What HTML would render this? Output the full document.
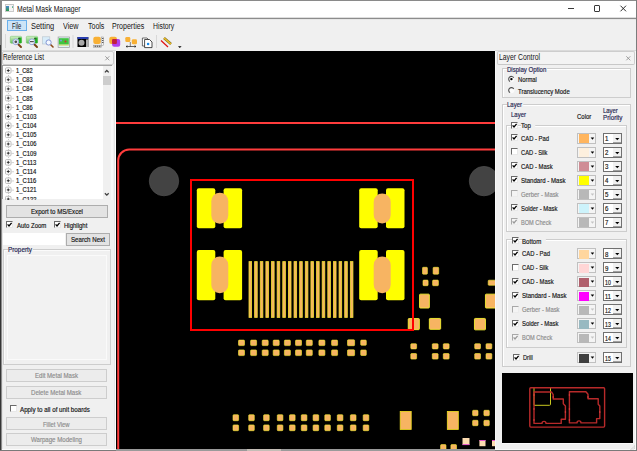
<!DOCTYPE html><html><head><meta charset="utf-8"><style>
*{box-sizing:border-box;margin:0;padding:0}
html,body{width:637px;height:451px;overflow:hidden;background:#f0f0f0;font-family:"Liberation Sans",sans-serif;font-size:7px;color:#000;position:relative}
.a{position:absolute}
.t{position:absolute;white-space:nowrap;line-height:1;-webkit-text-stroke:0.18px currentColor}
</style></head><body><div class="a" style="left:2px;top:1px;width:634px;height:17px;background:#fff"></div><div class="a" style="left:0px;top:0px;width:637px;height:1px;background:#8a8a8a"></div><div class="a" style="left:0px;top:0px;width:2px;height:45px;background:#8a8a8a"></div><div class="a" style="left:0px;top:45px;width:1px;height:406px;background:#363636"></div><div class="a" style="left:1px;top:45px;width:1px;height:406px;background:#8c8c8c"></div><div class="a" style="left:636px;top:0px;width:1px;height:451px;background:#7c7c7c"></div><div class="a" style="left:2px;top:17px;width:634px;height:1px;background:#dedede"></div><div class="a" style="left:2px;top:18px;width:634px;height:1px;background:#8c8c8c"></div><div class="a" style="left:2px;top:19px;width:634px;height:1px;background:#e6e6e6"></div><div class="a" style="left:5px;top:4.3px;width:9px;height:7.8px;background:#f4f4f4;border:1px solid #cacaca;border-top:1.3px solid #c4c4c4"></div><div class="a" style="left:6.2px;top:5.8px;width:2.8px;height:5px;background:linear-gradient(#4a88d0,#2a9a48)"></div><div class="a" style="left:12px;top:5.8px;width:1px;height:2px;background:linear-gradient(#78b0e0,#60c060)"></div><div class="t" style="left:17.10px;top:5px;font-size:8.3px;color:#141414;transform:scaleX(0.8206);transform-origin:0 0;-webkit-text-stroke:0;">Metal Mask Manager</div><div class="a" style="left:568.2px;top:8px;width:6px;height:1.2px;background:#3a3a3a"></div><div class="a" style="left:594px;top:5px;width:6.3px;height:6.8px;border:1px solid #3a3a3a;border-radius:1px"></div><svg class="a" style="left:619px;top:5px;overflow:visible" width="8" height="8" viewBox="619 5 8 8"><path d="M620.5 5.7L626 11.3M626 5.7L620.5 11.3" stroke="#222" stroke-width="0.95"/></svg><div class="a" style="left:7px;top:20px;width:19.5px;height:11px;background:#cce4f7;border:1px solid #6ab0ec"></div><div class="t" style="left:11.90px;top:22px;font-size:8.3px;color:#141414;transform:scaleX(0.6949);transform-origin:0 0;-webkit-text-stroke:0;">File</div><div class="t" style="left:30.50px;top:22px;font-size:8.3px;color:#141414;transform:scaleX(0.8976);transform-origin:0 0;-webkit-text-stroke:0;">Setting</div><div class="t" style="left:62.70px;top:22px;font-size:8.3px;color:#141414;transform:scaleX(0.8686);transform-origin:0 0;-webkit-text-stroke:0;">View</div><div class="t" style="left:87.60px;top:22px;font-size:8.3px;color:#141414;transform:scaleX(0.8459);transform-origin:0 0;-webkit-text-stroke:0;">Tools</div><div class="t" style="left:112.40px;top:22px;font-size:8.3px;color:#141414;transform:scaleX(0.8512);transform-origin:0 0;-webkit-text-stroke:0;">Properties</div><div class="t" style="left:153.00px;top:22px;font-size:8.3px;color:#141414;transform:scaleX(0.8245);transform-origin:0 0;-webkit-text-stroke:0;">History</div><div class="a" style="left:5px;top:34px;width:1px;height:14px;background:#d8d8d8"></div><div class="a" style="left:2px;top:50px;width:114px;height:1px;background:#dadada"></div><div class="a" style="left:495px;top:50px;width:141px;height:1px;background:#dadada"></div><svg class="a" style="left:0;top:33px" width="190" height="17" viewBox="0 33 190 17">
<defs>
<linearGradient id="gg" x1="0" y1="0" x2="0" y2="1"><stop offset="0" stop-color="#d2f0ca"/><stop offset="0.5" stop-color="#9ad88e"/><stop offset="1" stop-color="#62c05a"/></linearGradient>
</defs>
<rect x="10.3" y="36.3" width="11.3" height="7" rx="1" fill="url(#gg)" stroke="#6cbf60" stroke-width="0.5"/>
<rect x="18.5" y="37.5" width="3" height="5.5" fill="#22b022"/><circle cx="19" cy="38.5" r="0.8" fill="#3a3a3a"/>
<line x1="18" y1="44" x2="21" y2="47" stroke="#7a4418" stroke-width="2" stroke-linecap="round"/>
<circle cx="15.8" cy="41.8" r="2.9" fill="#e8eef8" stroke="#98a8dc" stroke-width="1"/>
<circle cx="15.8" cy="41.8" r="1.4" fill="#505050"/>
<rect x="26.3" y="36.3" width="11.3" height="7" rx="1" fill="url(#gg)" stroke="#6cbf60" stroke-width="0.5"/>
<rect x="34.5" y="37.5" width="3" height="5.5" fill="#22b022"/><circle cx="35" cy="38.5" r="0.8" fill="#3a3a3a"/>
<line x1="34" y1="44" x2="37" y2="47" stroke="#7a4418" stroke-width="2" stroke-linecap="round"/>
<circle cx="31.9" cy="41.8" r="2.9" fill="#eef2fa" stroke="#98a8dc" stroke-width="1"/>
<rect x="30" y="41" width="3.8" height="1.2" fill="#555"/>
<rect x="42.3" y="36.8" width="7.5" height="7.2" fill="#d8ecf8" stroke="#b8c4cc" stroke-width="0.6"/>
<line x1="50" y1="44" x2="53" y2="47" stroke="#8a4a1a" stroke-width="1.6" stroke-linecap="round"/>
<circle cx="48.6" cy="42.5" r="2.6" fill="#f4f8ff" stroke="#7c8fd0" stroke-width="0.9"/>
<rect x="58.1" y="37" width="11.3" height="10.5" fill="#dff3f8" stroke="#9a9a9a" stroke-width="0.7"/>
<rect x="58.8" y="38.2" width="10" height="6.4" fill="#3fc43f"/>
<circle cx="61" cy="40.5" r="1" fill="#7aa0e0"/><circle cx="65.5" cy="41.5" r="1" fill="#d03030"/>
<rect x="59" y="44.6" width="9.8" height="1" fill="#d8d860"/>
<rect x="72.5" y="35" width="1" height="13" fill="#d8d8d8"/>
<rect x="77.5" y="37" width="10.8" height="10" fill="#000"/>
<rect x="77.5" y="37" width="10.8" height="2" fill="#2a3fb0"/>
<circle cx="81.5" cy="42.8" r="3" fill="#a8a8a8"/>
<rect x="86" y="39.5" width="2" height="7.5" fill="#b0b0b0"/>
<rect x="93.3" y="36.8" width="7.5" height="7.2" rx="2" fill="#f8b034"/>
<rect x="101.2" y="37" width="2.4" height="8.5" fill="#f4f4f4" stroke="#8a8a8a" stroke-width="0.5"/>
<path d="M102 38.5H103.4M102 40.5H103.4M102 42.5H103.4" stroke="#333" stroke-width="0.8"/>
<rect x="93.5" y="45.2" width="8" height="2" fill="#f4f4f4" stroke="#8a8a8a" stroke-width="0.5"/>
<path d="M94.5 46.2H100.5" stroke="#333" stroke-width="1" stroke-dasharray="1.6 0.6"/>
<rect x="109.3" y="36.8" width="7.6" height="7.2" rx="2" fill="#f8b034"/>
<rect x="112.1" y="39" width="8.1" height="7.8" rx="2" fill="#b040f0"/>
<rect x="112.1" y="39" width="4.8" height="5" rx="1" fill="#c02040"/>
<rect x="125.3" y="37" width="5" height="5" rx="1.3" fill="#f8b034"/>
<rect x="131.8" y="39.3" width="5.2" height="5" rx="1.3" fill="#f8b034"/>
<line x1="130.3" y1="42" x2="130.3" y2="46.5" stroke="#333" stroke-width="0.6"/>
<path d="M126 46.5H136M126 46.5L127.5 45.7M126 46.5L127.5 47.3M136 46.5L134.5 45.7M136 46.5L134.5 47.3" stroke="#222" stroke-width="0.7" fill="none"/>
<path d="M142.4 38H147L149 40V46H142.4Z" fill="#fff" stroke="#333" stroke-width="0.7"/>
<path d="M144.6 39.5H149.5L152 42V47.6H144.6Z" fill="#fff" stroke="#222" stroke-width="0.8"/>
<circle cx="148.1" cy="44" r="1.3" fill="#1a8ae8"/>
<rect x="156" y="35" width="1" height="13" fill="#d8d8d8"/>
<line x1="164" y1="38" x2="171" y2="44" stroke="#7a6a30" stroke-width="2.6"/>
<line x1="164" y1="38" x2="171" y2="44" stroke="#f0c020" stroke-width="1.6"/>
<line x1="161" y1="40.5" x2="168" y2="47" stroke="#e01010" stroke-width="1.2"/>
<path d="M178 46.3H181.6L179.8 48Z" fill="#000"/>
</svg><div class="a" style="left:2px;top:51px;width:112px;height:14px;background:#f3f3f3;border:1px solid #cdcdcd;border-radius:2px"></div><div class="a" style="left:2px;top:65px;width:110px;height:1px;background:#a4a4a4"></div><div class="t" style="left:3.10px;top:53px;font-size:8.3px;color:#141414;transform:scaleX(0.7679);transform-origin:0 0;-webkit-text-stroke:0;">Reference List</div><svg class="a" style="left:104px;top:55px;overflow:visible" width="7" height="7" viewBox="104 55 7 7"><path d="M105.3 56.3L109.3 60.3M109.3 56.3L105.3 60.3" stroke="#8a8a8a" stroke-width="0.8"/></svg><div class="a" style="left:2px;top:66px;width:110px;height:133px;background:#fff"></div><div class="a" style="left:103px;top:66px;width:8px;height:134px;background:#f0f0f0"></div><div class="a" style="left:103px;top:76px;width:8px;height:9px;background:#cdcdcd"></div><svg class="a" style="left:103px;top:66px;overflow:visible" width="8" height="8" viewBox="103 66 8 8"><path d="M104.9 72.4L106.8 70.5L108.7 72.4" stroke="#404040" fill="none" stroke-width="1.3"/></svg><svg class="a" style="left:103px;top:190px;overflow:visible" width="8" height="8" viewBox="103 190 8 8"><path d="M104.9 193.3L106.8 195.2L108.7 193.3" stroke="#404040" fill="none" stroke-width="1.3"/></svg><div class="a" style="left:111px;top:66px;width:2px;height:134px;background:#f8f8f8"></div><svg class="a" style="left:2px;top:66px" width="100" height="134" viewBox="2 66 100 134"><line x1="8.5" y1="73" x2="8.5" y2="200" stroke="#c8c8c8" stroke-width="1" stroke-dasharray="1 1"/><rect x="5.5" y="67.80" width="5.5" height="5.5" rx="1" fill="#fff" stroke="#b4b4b4" stroke-width="0.9"/><path d="M6.8 70.55H9.7M8.25 69.10V72.00" stroke="#222" stroke-width="0.9"/><line x1="11.3" y1="70.80" x2="14" y2="70.80" stroke="#c8c8c8" stroke-width="0.8"/><rect x="5.5" y="76.98" width="5.5" height="5.5" rx="1" fill="#fff" stroke="#b4b4b4" stroke-width="0.9"/><path d="M6.8 79.73H9.7M8.25 78.28V81.18" stroke="#222" stroke-width="0.9"/><line x1="11.3" y1="79.98" x2="14" y2="79.98" stroke="#c8c8c8" stroke-width="0.8"/><rect x="5.5" y="86.16" width="5.5" height="5.5" rx="1" fill="#fff" stroke="#b4b4b4" stroke-width="0.9"/><path d="M6.8 88.91H9.7M8.25 87.46V90.36" stroke="#222" stroke-width="0.9"/><line x1="11.3" y1="89.16" x2="14" y2="89.16" stroke="#c8c8c8" stroke-width="0.8"/><rect x="5.5" y="95.34" width="5.5" height="5.5" rx="1" fill="#fff" stroke="#b4b4b4" stroke-width="0.9"/><path d="M6.8 98.09H9.7M8.25 96.64V99.54" stroke="#222" stroke-width="0.9"/><line x1="11.3" y1="98.34" x2="14" y2="98.34" stroke="#c8c8c8" stroke-width="0.8"/><rect x="5.5" y="104.52" width="5.5" height="5.5" rx="1" fill="#fff" stroke="#b4b4b4" stroke-width="0.9"/><path d="M6.8 107.27H9.7M8.25 105.82V108.72" stroke="#222" stroke-width="0.9"/><line x1="11.3" y1="107.52" x2="14" y2="107.52" stroke="#c8c8c8" stroke-width="0.8"/><rect x="5.5" y="113.70" width="5.5" height="5.5" rx="1" fill="#fff" stroke="#b4b4b4" stroke-width="0.9"/><path d="M6.8 116.45H9.7M8.25 115.00V117.90" stroke="#222" stroke-width="0.9"/><line x1="11.3" y1="116.70" x2="14" y2="116.70" stroke="#c8c8c8" stroke-width="0.8"/><rect x="5.5" y="122.88" width="5.5" height="5.5" rx="1" fill="#fff" stroke="#b4b4b4" stroke-width="0.9"/><path d="M6.8 125.63H9.7M8.25 124.18V127.08" stroke="#222" stroke-width="0.9"/><line x1="11.3" y1="125.88" x2="14" y2="125.88" stroke="#c8c8c8" stroke-width="0.8"/><rect x="5.5" y="132.06" width="5.5" height="5.5" rx="1" fill="#fff" stroke="#b4b4b4" stroke-width="0.9"/><path d="M6.8 134.81H9.7M8.25 133.36V136.26" stroke="#222" stroke-width="0.9"/><line x1="11.3" y1="135.06" x2="14" y2="135.06" stroke="#c8c8c8" stroke-width="0.8"/><rect x="5.5" y="141.24" width="5.5" height="5.5" rx="1" fill="#fff" stroke="#b4b4b4" stroke-width="0.9"/><path d="M6.8 143.99H9.7M8.25 142.54V145.44" stroke="#222" stroke-width="0.9"/><line x1="11.3" y1="144.24" x2="14" y2="144.24" stroke="#c8c8c8" stroke-width="0.8"/><rect x="5.5" y="150.42" width="5.5" height="5.5" rx="1" fill="#fff" stroke="#b4b4b4" stroke-width="0.9"/><path d="M6.8 153.17H9.7M8.25 151.72V154.62" stroke="#222" stroke-width="0.9"/><line x1="11.3" y1="153.42" x2="14" y2="153.42" stroke="#c8c8c8" stroke-width="0.8"/><rect x="5.5" y="159.60" width="5.5" height="5.5" rx="1" fill="#fff" stroke="#b4b4b4" stroke-width="0.9"/><path d="M6.8 162.35H9.7M8.25 160.90V163.80" stroke="#222" stroke-width="0.9"/><line x1="11.3" y1="162.60" x2="14" y2="162.60" stroke="#c8c8c8" stroke-width="0.8"/><rect x="5.5" y="168.78" width="5.5" height="5.5" rx="1" fill="#fff" stroke="#b4b4b4" stroke-width="0.9"/><path d="M6.8 171.53H9.7M8.25 170.08V172.98" stroke="#222" stroke-width="0.9"/><line x1="11.3" y1="171.78" x2="14" y2="171.78" stroke="#c8c8c8" stroke-width="0.8"/><rect x="5.5" y="177.96" width="5.5" height="5.5" rx="1" fill="#fff" stroke="#b4b4b4" stroke-width="0.9"/><path d="M6.8 180.71H9.7M8.25 179.26V182.16" stroke="#222" stroke-width="0.9"/><line x1="11.3" y1="180.96" x2="14" y2="180.96" stroke="#c8c8c8" stroke-width="0.8"/><rect x="5.5" y="187.14" width="5.5" height="5.5" rx="1" fill="#fff" stroke="#b4b4b4" stroke-width="0.9"/><path d="M6.8 189.89H9.7M8.25 188.44V191.34" stroke="#222" stroke-width="0.9"/><line x1="11.3" y1="190.14" x2="14" y2="190.14" stroke="#c8c8c8" stroke-width="0.8"/><rect x="5.5" y="196.32" width="5.5" height="5.5" rx="1" fill="#fff" stroke="#b4b4b4" stroke-width="0.9"/><path d="M6.8 199.07H9.7M8.25 197.62V200.52" stroke="#222" stroke-width="0.9"/><line x1="11.3" y1="199.32" x2="14" y2="199.32" stroke="#c8c8c8" stroke-width="0.8"/></svg><div class="t" style="left:15.50px;top:67px;font-size:7.4px;color:#141414;transform:scaleX(0.7612);transform-origin:0 0;">1_C82</div><div class="t" style="left:15.50px;top:76px;font-size:7.4px;color:#141414;transform:scaleX(0.7612);transform-origin:0 0;">1_C83</div><div class="t" style="left:15.50px;top:85px;font-size:7.4px;color:#141414;transform:scaleX(0.7612);transform-origin:0 0;">1_C84</div><div class="t" style="left:15.50px;top:95px;font-size:7.4px;color:#141414;transform:scaleX(0.7612);transform-origin:0 0;">1_C85</div><div class="t" style="left:15.50px;top:104px;font-size:7.4px;color:#141414;transform:scaleX(0.7612);transform-origin:0 0;">1_C86</div><div class="t" style="left:15.50px;top:113px;font-size:7.4px;color:#141414;transform:scaleX(0.7869);transform-origin:0 0;">1_C103</div><div class="t" style="left:15.50px;top:122px;font-size:7.4px;color:#141414;transform:scaleX(0.7869);transform-origin:0 0;">1_C104</div><div class="t" style="left:15.50px;top:131px;font-size:7.4px;color:#141414;transform:scaleX(0.7869);transform-origin:0 0;">1_C105</div><div class="t" style="left:15.50px;top:140px;font-size:7.4px;color:#141414;transform:scaleX(0.7869);transform-origin:0 0;">1_C106</div><div class="t" style="left:15.50px;top:150px;font-size:7.4px;color:#141414;transform:scaleX(0.7869);transform-origin:0 0;">1_C109</div><div class="t" style="left:15.50px;top:159px;font-size:7.4px;color:#141414;transform:scaleX(0.8038);transform-origin:0 0;">1_C113</div><div class="t" style="left:15.50px;top:168px;font-size:7.4px;color:#141414;transform:scaleX(0.8038);transform-origin:0 0;">1_C114</div><div class="t" style="left:15.50px;top:177px;font-size:7.4px;color:#141414;transform:scaleX(0.8038);transform-origin:0 0;">1_C116</div><div class="t" style="left:15.50px;top:186px;font-size:7.4px;color:#141414;transform:scaleX(0.7869);transform-origin:0 0;">1_C121</div><div class="a" style="left:2px;top:66px;width:100px;height:134px;overflow:hidden"><div class="t" style="left:13.5px;top:130px;font-size:7.4px;color:#141414;transform:scaleX(0.7869);transform-origin:0 0">1_C122</div></div><div class="a" style="left:6px;top:204.5px;width:102px;height:13px;background:#e3e3e3;border:1px solid #adadad"></div><div class="t" style="left:30.70px;top:208px;font-size:7.4px;color:#141414;transform:scaleX(0.8264);transform-origin:0 0;">Export to MS/Excel</div><div class="a" style="left:6px;top:221px;width:7px;height:7px;background:#fff;border-top:1px solid #6a6a6a;border-left:1px solid #6a6a6a;border-right:1px solid #e8e8e8;border-bottom:1px solid #e8e8e8"></div><svg class="a" style="left:6px;top:221px;overflow:visible" width="7" height="7" viewBox="6 221 7 7"><path d="M7.6 224.4L9 226L11.6 222.8" stroke="#000" fill="none" stroke-width="1.3"/></svg><div class="t" style="left:16.60px;top:222px;font-size:7.4px;color:#141414;transform:scaleX(0.8121);transform-origin:0 0;">Auto Zoom</div><div class="a" style="left:54px;top:221px;width:7px;height:7px;background:#fff;border-top:1px solid #6a6a6a;border-left:1px solid #6a6a6a;border-right:1px solid #e8e8e8;border-bottom:1px solid #e8e8e8"></div><svg class="a" style="left:54px;top:221px;overflow:visible" width="7" height="7" viewBox="54 221 7 7"><path d="M55.6 224.4L57 226L59.6 222.8" stroke="#000" fill="none" stroke-width="1.3"/></svg><div class="t" style="left:64.10px;top:222px;font-size:7.4px;color:#141414;transform:scaleX(0.8124);transform-origin:0 0;">Highlight</div><div class="a" style="left:2px;top:233px;width:63px;height:12px;background:#fff"></div><div class="a" style="left:66px;top:232.5px;width:44px;height:13px;background:#e3e3e3;border:1px solid #adadad"></div><div class="t" style="left:70.80px;top:236px;font-size:7.4px;color:#141414;transform:scaleX(0.8325);transform-origin:0 0;">Search Next</div><div class="a" style="left:3px;top:249px;width:108px;height:116px;border:1px solid #cdcdcd"></div><div class="a" style="left:4px;top:250px;width:106px;height:114px;border-top:1px solid #fbfbfb;border-left:1px solid #fbfbfb"></div><div class="a" style="left:7px;top:255px;width:100px;height:105px;border:1px solid #fafafa;background:#f2f2f2"></div><div class="t" style="left:7.90px;top:246px;font-size:7.4px;color:#1e2450;transform:scaleX(0.8581);transform-origin:0 0;background:#f0f0f0;padding:0 1px 0 0">Property</div><div class="a" style="left:6px;top:369px;width:101px;height:13px;background:#ececec;border:1px solid #cdcdcd"></div><div class="t" style="left:34.70px;top:372px;font-size:7.4px;color:#8c8c8c;transform:scaleX(0.8168);transform-origin:0 0;">Edit Metal Mask</div><div class="a" style="left:6px;top:385.5px;width:101px;height:13px;background:#ececec;border:1px solid #cdcdcd"></div><div class="t" style="left:31.30px;top:389px;font-size:7.4px;color:#8c8c8c;transform:scaleX(0.8224);transform-origin:0 0;">Delete Metal Mask</div><div class="a" style="left:10px;top:405px;width:7px;height:7px;background:#fff;border-top:1px solid #6a6a6a;border-left:1px solid #6a6a6a;border-right:1px solid #e8e8e8;border-bottom:1px solid #e8e8e8"></div><div class="t" style="left:19.80px;top:406px;font-size:7.4px;color:#141414;transform:scaleX(0.8424);transform-origin:0 0;">Apply to all of unit boards</div><div class="a" style="left:6px;top:417.3px;width:101px;height:13px;background:#ececec;border:1px solid #cdcdcd"></div><div class="t" style="left:43.20px;top:421px;font-size:7.4px;color:#8c8c8c;transform:scaleX(0.7919);transform-origin:0 0;">Fillet View</div><div class="a" style="left:6px;top:433px;width:101px;height:13px;background:#ececec;border:1px solid #cdcdcd"></div><div class="t" style="left:31.10px;top:436px;font-size:7.4px;color:#8c8c8c;transform:scaleX(0.8246);transform-origin:0 0;">Warpage Modeling</div><div class="a" style="left:114px;top:51px;width:1px;height:398px;background:#e4e4e4"></div><div class="a" style="left:115px;top:51px;width:1px;height:398px;background:#fdfdfd"></div><svg class="a" style="left:116px;top:51px" width="379" height="398" viewBox="116 51 379 398"><rect x="116" y="51" width="379" height="398" fill="#000"/><line x1="116" y1="123" x2="495" y2="123" stroke="#ff3c3c" stroke-width="2"/><path d="M118.2 460 V160.5 A11 11 0 0 1 129.2 149.5 H500" fill="none" stroke="#ff3c3c" stroke-width="2"/><circle cx="164" cy="181.1" r="14.7" fill="#434343" stroke="#4c4c4c" stroke-width="0.8"/><circle cx="484" cy="181.1" r="14.7" fill="#434343" stroke="#4c4c4c" stroke-width="0.8"/><rect x="196.8" y="188.3" width="18.5" height="40" rx="2" fill="#ffff00"/><rect x="223.60000000000002" y="188.3" width="18.5" height="40" rx="2" fill="#ffff00"/><rect x="211.3" y="192.8" width="17" height="31" rx="8.5" fill="#f7b462"/><rect x="359.2" y="188.3" width="18.5" height="40" rx="2" fill="#ffff00"/><rect x="386.0" y="188.3" width="18.5" height="40" rx="2" fill="#ffff00"/><rect x="373.7" y="193.5" width="17" height="30" rx="8.5" fill="#f7b462"/><rect x="196.8" y="250" width="18.5" height="50.3" rx="2" fill="#ffff00"/><rect x="223.60000000000002" y="250" width="18.5" height="50.3" rx="2" fill="#ffff00"/><rect x="211.3" y="256.6" width="17" height="36.6" rx="8.5" fill="#f7b462"/><rect x="359.2" y="250" width="18.5" height="50.3" rx="2" fill="#ffff00"/><rect x="386.0" y="250" width="18.5" height="50.3" rx="2" fill="#ffff00"/><rect x="373.7" y="256.6" width="17" height="36.6" rx="8.5" fill="#f7b462"/><rect x="249.00" y="261.6" width="2.6" height="55.8" fill="#f7b462" stroke="#f0e030" stroke-width="0.8"/><rect x="254.63" y="261.6" width="2.6" height="55.8" fill="#f7b462" stroke="#f0e030" stroke-width="0.8"/><rect x="260.26" y="261.6" width="2.6" height="55.8" fill="#f7b462" stroke="#f0e030" stroke-width="0.8"/><rect x="265.89" y="261.6" width="2.6" height="55.8" fill="#f7b462" stroke="#f0e030" stroke-width="0.8"/><rect x="271.52" y="261.6" width="2.6" height="55.8" fill="#f7b462" stroke="#f0e030" stroke-width="0.8"/><rect x="277.15" y="261.6" width="2.6" height="55.8" fill="#f7b462" stroke="#f0e030" stroke-width="0.8"/><rect x="282.78" y="261.6" width="2.6" height="55.8" fill="#f7b462" stroke="#f0e030" stroke-width="0.8"/><rect x="288.41" y="261.6" width="2.6" height="55.8" fill="#f7b462" stroke="#f0e030" stroke-width="0.8"/><rect x="294.04" y="261.6" width="2.6" height="55.8" fill="#f7b462" stroke="#f0e030" stroke-width="0.8"/><rect x="299.67" y="261.6" width="2.6" height="55.8" fill="#f7b462" stroke="#f0e030" stroke-width="0.8"/><rect x="305.30" y="261.6" width="2.6" height="55.8" fill="#f7b462" stroke="#f0e030" stroke-width="0.8"/><rect x="310.93" y="261.6" width="2.6" height="55.8" fill="#f7b462" stroke="#f0e030" stroke-width="0.8"/><rect x="316.56" y="261.6" width="2.6" height="55.8" fill="#f7b462" stroke="#f0e030" stroke-width="0.8"/><rect x="322.19" y="261.6" width="2.6" height="55.8" fill="#f7b462" stroke="#f0e030" stroke-width="0.8"/><rect x="327.82" y="261.6" width="2.6" height="55.8" fill="#f7b462" stroke="#f0e030" stroke-width="0.8"/><rect x="333.45" y="261.6" width="2.6" height="55.8" fill="#f7b462" stroke="#f0e030" stroke-width="0.8"/><rect x="339.08" y="261.6" width="2.6" height="55.8" fill="#f7b462" stroke="#f0e030" stroke-width="0.8"/><rect x="344.71" y="261.6" width="2.6" height="55.8" fill="#f7b462" stroke="#f0e030" stroke-width="0.8"/><rect x="350.34" y="261.6" width="2.6" height="55.8" fill="#f7b462" stroke="#f0e030" stroke-width="0.8"/><rect x="238.50" y="340.10" width="6.00" height="5.50" rx="0.8" fill="#f7b462" stroke="#f6f030" stroke-width="0.6"/><rect x="238.50" y="349.90" width="6.00" height="5.70" rx="0.8" fill="#f7b462" stroke="#f6f030" stroke-width="0.6"/><rect x="250.60" y="340.10" width="6.00" height="5.50" rx="0.8" fill="#f7b462" stroke="#f6f030" stroke-width="0.6"/><rect x="250.60" y="349.90" width="6.00" height="5.70" rx="0.8" fill="#f7b462" stroke="#f6f030" stroke-width="0.6"/><rect x="262.20" y="340.10" width="6.00" height="5.50" rx="0.8" fill="#f7b462" stroke="#f6f030" stroke-width="0.6"/><rect x="262.20" y="349.90" width="6.00" height="5.70" rx="0.8" fill="#f7b462" stroke="#f6f030" stroke-width="0.6"/><rect x="273.20" y="340.10" width="6.00" height="5.50" rx="0.8" fill="#f7b462" stroke="#f6f030" stroke-width="0.6"/><rect x="273.20" y="349.90" width="6.00" height="5.70" rx="0.8" fill="#f7b462" stroke="#f6f030" stroke-width="0.6"/><rect x="284.40" y="340.10" width="6.00" height="5.50" rx="0.8" fill="#f7b462" stroke="#f6f030" stroke-width="0.6"/><rect x="284.40" y="349.90" width="6.00" height="5.70" rx="0.8" fill="#f7b462" stroke="#f6f030" stroke-width="0.6"/><rect x="295.50" y="340.10" width="6.00" height="5.50" rx="0.8" fill="#f7b462" stroke="#f6f030" stroke-width="0.6"/><rect x="295.50" y="349.90" width="6.00" height="5.70" rx="0.8" fill="#f7b462" stroke="#f6f030" stroke-width="0.6"/><rect x="306.30" y="340.10" width="6.00" height="5.50" rx="0.8" fill="#f7b462" stroke="#f6f030" stroke-width="0.6"/><rect x="306.30" y="349.90" width="6.00" height="5.70" rx="0.8" fill="#f7b462" stroke="#f6f030" stroke-width="0.6"/><rect x="318.90" y="340.10" width="6.00" height="5.50" rx="0.8" fill="#f7b462" stroke="#f6f030" stroke-width="0.6"/><rect x="318.90" y="349.90" width="6.00" height="5.70" rx="0.8" fill="#f7b462" stroke="#f6f030" stroke-width="0.6"/><rect x="331.60" y="340.10" width="6.00" height="5.50" rx="0.8" fill="#f7b462" stroke="#f6f030" stroke-width="0.6"/><rect x="331.60" y="349.90" width="6.00" height="5.70" rx="0.8" fill="#f7b462" stroke="#f6f030" stroke-width="0.6"/><rect x="347.50" y="339.80" width="7.10" height="5.90" rx="0.8" fill="#f7b462" stroke="#f6f030" stroke-width="0.6"/><rect x="347.50" y="349.80" width="7.10" height="5.90" rx="0.8" fill="#f7b462" stroke="#f6f030" stroke-width="0.6"/><rect x="360.70" y="340.10" width="5.60" height="5.20" rx="0.8" fill="#f7b462" stroke="#f6f030" stroke-width="0.6"/><rect x="360.70" y="350.00" width="5.60" height="5.50" rx="0.8" fill="#f7b462" stroke="#f6f030" stroke-width="0.6"/><rect x="410.80" y="343.70" width="5.80" height="5.20" rx="0.8" fill="#f7b462" stroke="#f6f030" stroke-width="0.6"/><rect x="410.80" y="353.50" width="5.80" height="5.60" rx="0.8" fill="#f7b462" stroke="#f6f030" stroke-width="0.6"/><rect x="432.30" y="343.70" width="5.80" height="5.20" rx="0.8" fill="#f7b462" stroke="#f6f030" stroke-width="0.6"/><rect x="432.30" y="353.50" width="5.80" height="5.60" rx="0.8" fill="#f7b462" stroke="#f6f030" stroke-width="0.6"/><rect x="443.30" y="343.70" width="5.80" height="5.20" rx="0.8" fill="#f7b462" stroke="#f6f030" stroke-width="0.6"/><rect x="443.30" y="353.50" width="5.80" height="5.60" rx="0.8" fill="#f7b462" stroke="#f6f030" stroke-width="0.6"/><rect x="474.70" y="343.70" width="5.80" height="5.20" rx="0.8" fill="#f7b462" stroke="#f6f030" stroke-width="0.6"/><rect x="474.70" y="353.50" width="5.80" height="5.60" rx="0.8" fill="#f7b462" stroke="#f6f030" stroke-width="0.6"/><rect x="486.00" y="343.70" width="5.80" height="5.20" rx="0.8" fill="#f7b462" stroke="#f6f030" stroke-width="0.6"/><rect x="486.00" y="353.50" width="5.80" height="5.60" rx="0.8" fill="#f7b462" stroke="#f6f030" stroke-width="0.6"/><rect x="233.00" y="414.70" width="5.60" height="6.00" rx="0.8" fill="#f7b462" stroke="#f6f030" stroke-width="0.6"/><rect x="233.00" y="424.90" width="5.60" height="5.80" rx="0.8" fill="#f7b462" stroke="#f6f030" stroke-width="0.6"/><rect x="248.70" y="414.70" width="5.60" height="6.00" rx="0.8" fill="#f7b462" stroke="#f6f030" stroke-width="0.6"/><rect x="248.70" y="424.90" width="5.60" height="5.80" rx="0.8" fill="#f7b462" stroke="#f6f030" stroke-width="0.6"/><rect x="263.60" y="414.70" width="5.60" height="6.00" rx="0.8" fill="#f7b462" stroke="#f6f030" stroke-width="0.6"/><rect x="263.60" y="424.90" width="5.60" height="5.80" rx="0.8" fill="#f7b462" stroke="#f6f030" stroke-width="0.6"/><rect x="277.30" y="414.70" width="5.60" height="6.00" rx="0.8" fill="#f7b462" stroke="#f6f030" stroke-width="0.6"/><rect x="277.30" y="424.90" width="5.60" height="5.80" rx="0.8" fill="#f7b462" stroke="#f6f030" stroke-width="0.6"/><rect x="289.50" y="414.70" width="5.60" height="6.00" rx="0.8" fill="#f7b462" stroke="#f6f030" stroke-width="0.6"/><rect x="289.50" y="424.90" width="5.60" height="5.80" rx="0.8" fill="#f7b462" stroke="#f6f030" stroke-width="0.6"/><rect x="301.30" y="414.70" width="5.60" height="6.00" rx="0.8" fill="#f7b462" stroke="#f6f030" stroke-width="0.6"/><rect x="301.30" y="424.90" width="5.60" height="5.80" rx="0.8" fill="#f7b462" stroke="#f6f030" stroke-width="0.6"/><rect x="313.10" y="414.70" width="5.60" height="6.00" rx="0.8" fill="#f7b462" stroke="#f6f030" stroke-width="0.6"/><rect x="313.10" y="424.90" width="5.60" height="5.80" rx="0.8" fill="#f7b462" stroke="#f6f030" stroke-width="0.6"/><rect x="324.80" y="414.70" width="5.60" height="6.00" rx="0.8" fill="#f7b462" stroke="#f6f030" stroke-width="0.6"/><rect x="324.80" y="424.90" width="5.60" height="5.80" rx="0.8" fill="#f7b462" stroke="#f6f030" stroke-width="0.6"/><rect x="337.30" y="414.70" width="5.60" height="6.00" rx="0.8" fill="#f7b462" stroke="#f6f030" stroke-width="0.6"/><rect x="337.30" y="424.90" width="5.60" height="5.80" rx="0.8" fill="#f7b462" stroke="#f6f030" stroke-width="0.6"/><rect x="350.40" y="414.70" width="5.60" height="6.00" rx="0.8" fill="#f7b462" stroke="#f6f030" stroke-width="0.6"/><rect x="350.40" y="424.90" width="5.60" height="5.80" rx="0.8" fill="#f7b462" stroke="#f6f030" stroke-width="0.6"/><rect x="363.20" y="414.70" width="5.60" height="6.00" rx="0.8" fill="#f7b462" stroke="#f6f030" stroke-width="0.6"/><rect x="363.20" y="424.90" width="5.60" height="5.80" rx="0.8" fill="#f7b462" stroke="#f6f030" stroke-width="0.6"/><rect x="400.2" y="411.4" width="11" height="18" fill="#f7b462" stroke="#f0e020" stroke-width="0.8"/><rect x="447.3" y="411.4" width="11" height="18" fill="#f7b462" stroke="#f0e020" stroke-width="0.8"/><rect x="472.60" y="410.30" width="5.40" height="5.40" rx="0.8" fill="#f7b462" stroke="#f6f030" stroke-width="0.6"/><rect x="483.90" y="410.30" width="5.40" height="5.40" rx="0.8" fill="#f7b462" stroke="#f6f030" stroke-width="0.6"/><rect x="472.60" y="420.30" width="5.40" height="5.40" rx="0.8" fill="#f7b462" stroke="#f6f030" stroke-width="0.6"/><rect x="483.90" y="420.30" width="5.40" height="5.40" rx="0.8" fill="#f7b462" stroke="#f6f030" stroke-width="0.6"/><rect x="462.5" y="438" width="7" height="7" fill="#fcdcb0"/><rect x="462.5" y="444.2" width="7" height="0.9" fill="#e040d0"/><rect x="479.4" y="440" width="6.1" height="6.2" fill="#fcdcb0"/><rect x="479.4" y="440" width="6.1" height="0.9" fill="#e040d0"/><rect x="492" y="440" width="6" height="6.2" fill="#fcdcb0"/><rect x="492" y="440" width="6" height="0.9" fill="#e040d0"/><rect x="440.60" y="444.60" width="5.40" height="5.40" rx="0.8" fill="#f7b462" stroke="#f6f030" stroke-width="0.6"/><rect x="450.90" y="444.60" width="5.60" height="5.40" rx="0.8" fill="#f7b462" stroke="#f6f030" stroke-width="0.6"/><rect x="422.50" y="267.30" width="4.90" height="6.90" rx="0.8" fill="#f7b462" stroke="#f6f030" stroke-width="0.6"/><rect x="433.10" y="267.30" width="5.60" height="6.90" rx="0.8" fill="#f7b462" stroke="#f6f030" stroke-width="0.6"/><rect x="423.00" y="280.10" width="5.10" height="5.60" rx="0.8" fill="#f7b462" stroke="#f6f030" stroke-width="0.6"/><rect x="432.60" y="280.10" width="5.80" height="5.60" rx="0.8" fill="#f7b462" stroke="#f6f030" stroke-width="0.6"/><rect x="419.55" y="294.15" width="9.80" height="13.90" rx="0.8" fill="#f7b462" stroke="#f6f030" stroke-width="0.9"/><rect x="485.45" y="294.15" width="11.10" height="13.90" rx="0.8" fill="#f7b462" stroke="#f6f030" stroke-width="0.9"/><rect x="488.20" y="280.20" width="7.40" height="5.10" rx="0.8" fill="#f7b462" stroke="#f6f030" stroke-width="0.6"/><rect x="408.25" y="318.55" width="11.10" height="11.10" rx="0.8" fill="#f7b462" stroke="#f6f030" stroke-width="0.9"/><rect x="429.35" y="318.45" width="11.30" height="10.90" rx="0.8" fill="#f7b462" stroke="#f6f030" stroke-width="0.9"/><rect x="474.45" y="318.45" width="11.00" height="11.40" rx="0.8" fill="#f7b462" stroke="#f6f030" stroke-width="0.9"/><rect x="191" y="180" width="222" height="150" fill="none" stroke="#ff0000" stroke-width="2"/></svg><div class="a" style="left:497px;top:51px;width:138px;height:14px;background:#f3f3f3;border:1px solid #cdcdcd;border-bottom:1.5px solid #c8c8c8;border-radius:2px"></div><div class="t" style="left:498.70px;top:53px;font-size:8.3px;color:#141414;transform:scaleX(0.8229);transform-origin:0 0;-webkit-text-stroke:0;">Layer Control</div><svg class="a" style="left:625px;top:55px;overflow:visible" width="7" height="7" viewBox="625 55 7 7"><path d="M626.3 56.3L630.3 60.3M630.3 56.3L626.3 60.3" stroke="#8a8a8a" stroke-width="0.8"/></svg><div class="a" style="left:635px;top:51px;width:1px;height:400px;background:#fafafa"></div><div class="a" style="left:495px;top:51px;width:1px;height:398px;background:#f8f8f8"></div><div class="a" style="left:502px;top:68px;width:129px;height:30px;border:1px solid #cdcdcd"></div><div class="a" style="left:503px;top:69px;width:127px;height:28px;border-top:1px solid #ffffff;border-left:1px solid #ffffff"></div><div class="t" style="left:506.80px;top:66px;font-size:7.4px;color:#1e2450;transform:scaleX(0.8187);transform-origin:0 0;background:#f0f0f0;padding:0 1px 0 0">Display Option</div><svg class="a" style="left:507px;top:75px;overflow:visible" width="9" height="20" viewBox="507 75 9 20"><circle cx="511.4" cy="79.1" r="3" fill="#fbfbfb"/><path d="M510.05 81.44A2.7 2.7 0 1 1 513.74 77.75" fill="none" stroke="#505050" stroke-width="1.1"/><circle cx="511.4" cy="79.1" r="1.2" fill="#000"/><circle cx="511.4" cy="90.3" r="3" fill="#fbfbfb"/><path d="M510.05 92.64A2.7 2.7 0 1 1 513.74 88.95" fill="none" stroke="#505050" stroke-width="1.1"/></svg><div class="t" style="left:517.50px;top:76px;font-size:7.4px;color:#141414;transform:scaleX(0.7881);transform-origin:0 0;">Normal</div><div class="t" style="left:518.00px;top:88px;font-size:7.4px;color:#141414;transform:scaleX(0.8056);transform-origin:0 0;">Translucency Mode</div><div class="a" style="left:502px;top:104px;width:129px;height:263px;border:1px solid #cdcdcd"></div><div class="a" style="left:503px;top:105px;width:127px;height:261px;border-top:1px solid #ffffff;border-left:1px solid #ffffff"></div><div class="t" style="left:506.50px;top:101px;font-size:7.4px;color:#1e2450;transform:scaleX(0.8103);transform-origin:0 0;background:#f0f0f0;padding:0 1px 0 0">Layer</div><div class="t" style="left:510.50px;top:111px;font-size:7.4px;color:#1e2450;transform:scaleX(0.8103);transform-origin:0 0;">Layer</div><div class="t" style="left:577.00px;top:113px;font-size:7.4px;color:#141414;transform:scaleX(0.8083);transform-origin:0 0;">Color</div><div class="t" style="left:602.90px;top:107px;font-size:7.4px;color:#1e2450;transform:scaleX(0.7995);transform-origin:0 0;">Layer</div><div class="t" style="left:602.90px;top:114px;font-size:7.4px;color:#1e2450;transform:scaleX(0.8466);transform-origin:0 0;">Priority</div><div class="a" style="left:506px;top:125px;width:121px;height:107px;border:1px solid #cdcdcd"></div><div class="a" style="left:507px;top:126px;width:119px;height:105px;border-top:1px solid #ffffff;border-left:1px solid #ffffff"></div><div class="a" style="left:506px;top:239px;width:121px;height:109px;border:1px solid #cdcdcd"></div><div class="a" style="left:507px;top:240px;width:119px;height:107px;border-top:1px solid #ffffff;border-left:1px solid #ffffff"></div><div class="a" style="left:511px;top:121.5px;width:7px;height:7px;background:#fff;border-top:1px solid #6a6a6a;border-left:1px solid #6a6a6a;border-right:1px solid #e8e8e8;border-bottom:1px solid #e8e8e8"></div><svg class="a" style="left:511px;top:121.5px;overflow:visible" width="7" height="7" viewBox="511 121.5 7 7"><path d="M512.6 124.9L514 126.5L516.6 123.3" stroke="#000" fill="none" stroke-width="1.3"/></svg><div class="t" style="left:521.00px;top:122px;font-size:7.4px;color:#141414;transform:scaleX(0.8380);transform-origin:0 0;background:#f0f0f0;padding:0 5px 0 0">Top</div><div class="a" style="left:511px;top:134.2px;width:7px;height:7px;background:#fff;border-top:1px solid #6a6a6a;border-left:1px solid #6a6a6a;border-right:1px solid #e8e8e8;border-bottom:1px solid #e8e8e8"></div><svg class="a" style="left:511px;top:134.2px;overflow:visible" width="7" height="7" viewBox="511 134.2 7 7"><path d="M512.6 137.6L514 139.2L516.6 136.0" stroke="#000" fill="none" stroke-width="1.3"/></svg><div class="t" style="left:520.80px;top:135px;font-size:7.4px;color:#141414;transform:scaleX(0.7916);transform-origin:0 0;">CAD - Pad</div><div class="a" style="left:577.3px;top:132.5px;width:18.6px;height:11.3px;border:1px solid #c0c0c0;background:#f4f4f4"></div><div class="a" style="left:579.1px;top:134.0px;width:9.6px;height:9.3px;background:#ffb55e"></div><svg class="a" style="left:590px;top:136.5px;overflow:visible" width="5" height="3" viewBox="590 136.5 5 3"><path d="M590.7 137.0H594.2L592.45 139.2Z" fill="#000"/></svg><div class="a" style="left:603px;top:132.5px;width:19px;height:11.3px;border:1px solid #707070;background:#fff"></div><div class="a" style="left:612.8px;top:133.5px;width:8.2px;height:9.3px;background:#f0f0f0;border-bottom:1px solid #a0a0a0"></div><svg class="a" style="left:614px;top:136.5px;overflow:visible" width="7" height="4" viewBox="614 136.5 7 4"><path d="M615.2 137.5H619.4L617.3 139.8Z" fill="#000"/></svg><div class="t" style="left:605.20px;top:135px;font-size:7.4px;color:#141414;transform:scaleX(0.8260);transform-origin:0 0;">1</div><div class="a" style="left:511px;top:148.2px;width:7px;height:7px;background:#fff;border-top:1px solid #6a6a6a;border-left:1px solid #6a6a6a;border-right:1px solid #e8e8e8;border-bottom:1px solid #e8e8e8"></div><div class="t" style="left:520.80px;top:149px;font-size:7.4px;color:#141414;transform:scaleX(0.7735);transform-origin:0 0;">CAD - Silk</div><div class="a" style="left:577.3px;top:146.5px;width:18.6px;height:11.3px;border:1px solid #c0c0c0;background:#f4f4f4"></div><div class="a" style="left:579.1px;top:148.0px;width:9.6px;height:9.3px;background:#fdf0de"></div><svg class="a" style="left:590px;top:150.5px;overflow:visible" width="5" height="3" viewBox="590 150.5 5 3"><path d="M590.7 151.0H594.2L592.45 153.2Z" fill="#000"/></svg><div class="a" style="left:603px;top:146.5px;width:19px;height:11.3px;border:1px solid #707070;background:#fff"></div><div class="a" style="left:612.8px;top:147.5px;width:8.2px;height:9.3px;background:#f0f0f0;border-bottom:1px solid #a0a0a0"></div><svg class="a" style="left:614px;top:150.5px;overflow:visible" width="7" height="4" viewBox="614 150.5 7 4"><path d="M615.2 151.5H619.4L617.3 153.8Z" fill="#000"/></svg><div class="t" style="left:605.20px;top:149px;font-size:7.4px;color:#141414;transform:scaleX(0.8260);transform-origin:0 0;">2</div><div class="a" style="left:511px;top:162.2px;width:7px;height:7px;background:#fff;border-top:1px solid #6a6a6a;border-left:1px solid #6a6a6a;border-right:1px solid #e8e8e8;border-bottom:1px solid #e8e8e8"></div><svg class="a" style="left:511px;top:162.2px;overflow:visible" width="7" height="7" viewBox="511 162.2 7 7"><path d="M512.6 165.6L514 167.2L516.6 164.0" stroke="#000" fill="none" stroke-width="1.3"/></svg><div class="t" style="left:520.80px;top:163px;font-size:7.4px;color:#141414;transform:scaleX(0.7922);transform-origin:0 0;">CAD - Mask</div><div class="a" style="left:577.3px;top:160.5px;width:18.6px;height:11.3px;border:1px solid #c0c0c0;background:#f4f4f4"></div><div class="a" style="left:579.1px;top:162.0px;width:9.6px;height:9.3px;background:#cf8d95"></div><svg class="a" style="left:590px;top:164.5px;overflow:visible" width="5" height="3" viewBox="590 164.5 5 3"><path d="M590.7 165.0H594.2L592.45 167.2Z" fill="#000"/></svg><div class="a" style="left:603px;top:160.5px;width:19px;height:11.3px;border:1px solid #707070;background:#fff"></div><div class="a" style="left:612.8px;top:161.5px;width:8.2px;height:9.3px;background:#f0f0f0;border-bottom:1px solid #a0a0a0"></div><svg class="a" style="left:614px;top:164.5px;overflow:visible" width="7" height="4" viewBox="614 164.5 7 4"><path d="M615.2 165.5H619.4L617.3 167.8Z" fill="#000"/></svg><div class="t" style="left:605.20px;top:163px;font-size:7.4px;color:#141414;transform:scaleX(0.8260);transform-origin:0 0;">3</div><div class="a" style="left:511px;top:176.2px;width:7px;height:7px;background:#fff;border-top:1px solid #6a6a6a;border-left:1px solid #6a6a6a;border-right:1px solid #e8e8e8;border-bottom:1px solid #e8e8e8"></div><svg class="a" style="left:511px;top:176.2px;overflow:visible" width="7" height="7" viewBox="511 176.2 7 7"><path d="M512.6 179.6L514 181.2L516.6 178.0" stroke="#000" fill="none" stroke-width="1.3"/></svg><div class="t" style="left:520.80px;top:177px;font-size:7.4px;color:#141414;transform:scaleX(0.8196);transform-origin:0 0;">Standard - Mask</div><div class="a" style="left:577.3px;top:174.5px;width:18.6px;height:11.3px;border:1px solid #c0c0c0;background:#f4f4f4"></div><div class="a" style="left:579.1px;top:176.0px;width:9.6px;height:9.3px;background:#ffff00"></div><svg class="a" style="left:590px;top:178.5px;overflow:visible" width="5" height="3" viewBox="590 178.5 5 3"><path d="M590.7 179.0H594.2L592.45 181.2Z" fill="#000"/></svg><div class="a" style="left:603px;top:174.5px;width:19px;height:11.3px;border:1px solid #707070;background:#fff"></div><div class="a" style="left:612.8px;top:175.5px;width:8.2px;height:9.3px;background:#f0f0f0;border-bottom:1px solid #a0a0a0"></div><svg class="a" style="left:614px;top:178.5px;overflow:visible" width="7" height="4" viewBox="614 178.5 7 4"><path d="M615.2 179.5H619.4L617.3 181.8Z" fill="#000"/></svg><div class="t" style="left:605.20px;top:177px;font-size:7.4px;color:#141414;transform:scaleX(0.8260);transform-origin:0 0;">4</div><div class="a" style="left:511px;top:190.2px;width:7px;height:7px;background:#f4f4f4;border-top:1px solid #a8a8a8;border-left:1px solid #a8a8a8;border-right:1px solid #ececec;border-bottom:1px solid #ececec"></div><div class="t" style="left:520.80px;top:191px;font-size:7.4px;color:#8c8c8c;transform:scaleX(0.7951);transform-origin:0 0;">Gerber - Mask</div><div class="a" style="left:577.3px;top:188.5px;width:18.6px;height:11.3px;border:1px solid #c0c0c0;background:#f4f4f4"></div><div class="a" style="left:579.1px;top:190.0px;width:9.6px;height:9.3px;background:#b8b8b8"></div><svg class="a" style="left:590px;top:192.5px;overflow:visible" width="5" height="3" viewBox="590 192.5 5 3"><path d="M590.7 193.0H594.2L592.45 195.2Z" fill="#c4c4c4"/></svg><div class="a" style="left:603px;top:188.5px;width:19px;height:11.3px;border:1px solid #707070;background:#fff"></div><div class="a" style="left:612.8px;top:189.5px;width:8.2px;height:9.3px;background:#f0f0f0;border-bottom:1px solid #a0a0a0"></div><svg class="a" style="left:614px;top:192.5px;overflow:visible" width="7" height="4" viewBox="614 192.5 7 4"><path d="M615.2 193.5H619.4L617.3 195.8Z" fill="#000"/></svg><div class="t" style="left:605.20px;top:191px;font-size:7.4px;color:#141414;transform:scaleX(0.8260);transform-origin:0 0;">5</div><div class="a" style="left:511px;top:204.2px;width:7px;height:7px;background:#fff;border-top:1px solid #6a6a6a;border-left:1px solid #6a6a6a;border-right:1px solid #e8e8e8;border-bottom:1px solid #e8e8e8"></div><svg class="a" style="left:511px;top:204.2px;overflow:visible" width="7" height="7" viewBox="511 204.2 7 7"><path d="M512.6 207.6L514 209.2L516.6 206.0" stroke="#000" fill="none" stroke-width="1.3"/></svg><div class="t" style="left:520.80px;top:205px;font-size:7.4px;color:#141414;transform:scaleX(0.7996);transform-origin:0 0;">Solder - Mask</div><div class="a" style="left:577.3px;top:202.5px;width:18.6px;height:11.3px;border:1px solid #c0c0c0;background:#f4f4f4"></div><div class="a" style="left:579.1px;top:204.0px;width:9.6px;height:9.3px;background:#cdf3fb"></div><svg class="a" style="left:590px;top:206.5px;overflow:visible" width="5" height="3" viewBox="590 206.5 5 3"><path d="M590.7 207.0H594.2L592.45 209.2Z" fill="#000"/></svg><div class="a" style="left:603px;top:202.5px;width:19px;height:11.3px;border:1px solid #707070;background:#fff"></div><div class="a" style="left:612.8px;top:203.5px;width:8.2px;height:9.3px;background:#f0f0f0;border-bottom:1px solid #a0a0a0"></div><svg class="a" style="left:614px;top:206.5px;overflow:visible" width="7" height="4" viewBox="614 206.5 7 4"><path d="M615.2 207.5H619.4L617.3 209.8Z" fill="#000"/></svg><div class="t" style="left:605.20px;top:205px;font-size:7.4px;color:#141414;transform:scaleX(0.8260);transform-origin:0 0;">6</div><div class="a" style="left:511px;top:218.2px;width:7px;height:7px;background:#f4f4f4;border-top:1px solid #a8a8a8;border-left:1px solid #a8a8a8;border-right:1px solid #ececec;border-bottom:1px solid #ececec"></div><svg class="a" style="left:511px;top:218.2px;overflow:visible" width="7" height="7" viewBox="511 218.2 7 7"><path d="M512.6 221.6L514 223.2L516.6 220.0" stroke="#9a9a9a" fill="none" stroke-width="1.3"/></svg><div class="t" style="left:520.80px;top:219px;font-size:7.4px;color:#8c8c8c;transform:scaleX(0.7596);transform-origin:0 0;">BOM Check</div><div class="a" style="left:577.3px;top:216.5px;width:18.6px;height:11.3px;border:1px solid #c0c0c0;background:#f4f4f4"></div><div class="a" style="left:579.1px;top:218.0px;width:9.6px;height:9.3px;background:#b8b8b8"></div><svg class="a" style="left:590px;top:220.5px;overflow:visible" width="5" height="3" viewBox="590 220.5 5 3"><path d="M590.7 221.0H594.2L592.45 223.2Z" fill="#c4c4c4"/></svg><div class="a" style="left:603px;top:216.5px;width:19px;height:11.3px;border:1px solid #707070;background:#fff"></div><div class="a" style="left:612.8px;top:217.5px;width:8.2px;height:9.3px;background:#f0f0f0;border-bottom:1px solid #a0a0a0"></div><svg class="a" style="left:614px;top:220.5px;overflow:visible" width="7" height="4" viewBox="614 220.5 7 4"><path d="M615.2 221.5H619.4L617.3 223.8Z" fill="#000"/></svg><div class="t" style="left:605.20px;top:219px;font-size:7.4px;color:#141414;transform:scaleX(0.8260);transform-origin:0 0;">7</div><div class="a" style="left:512.2px;top:237px;width:7px;height:7px;background:#fff;border-top:1px solid #6a6a6a;border-left:1px solid #6a6a6a;border-right:1px solid #e8e8e8;border-bottom:1px solid #e8e8e8"></div><svg class="a" style="left:512.2px;top:237px;overflow:visible" width="7" height="7" viewBox="512.2 237 7 7"><path d="M513.8000000000001 240.4L515.2 242L517.8000000000001 238.8" stroke="#000" fill="none" stroke-width="1.3"/></svg><div class="t" style="left:522.20px;top:238px;font-size:7.4px;color:#141414;transform:scaleX(0.8231);transform-origin:0 0;background:#f0f0f0;padding:0 6px 0 0">Bottom</div><div class="a" style="left:512.2px;top:249.5px;width:7px;height:7px;background:#fff;border-top:1px solid #6a6a6a;border-left:1px solid #6a6a6a;border-right:1px solid #e8e8e8;border-bottom:1px solid #e8e8e8"></div><svg class="a" style="left:512.2px;top:249.5px;overflow:visible" width="7" height="7" viewBox="512.2 249.5 7 7"><path d="M513.8000000000001 252.9L515.2 254.5L517.8000000000001 251.3" stroke="#000" fill="none" stroke-width="1.3"/></svg><div class="t" style="left:522.20px;top:250px;font-size:7.4px;color:#141414;transform:scaleX(0.7916);transform-origin:0 0;">CAD - Pad</div><div class="a" style="left:577.3px;top:248.2px;width:18.6px;height:11.3px;border:1px solid #c0c0c0;background:#f4f4f4"></div><div class="a" style="left:579.1px;top:249.7px;width:9.6px;height:9.3px;background:#ffd69e"></div><svg class="a" style="left:590px;top:252.2px;overflow:visible" width="5" height="3" viewBox="590 252.2 5 3"><path d="M590.7 252.7H594.2L592.45 254.89999999999998Z" fill="#000"/></svg><div class="a" style="left:603px;top:248.2px;width:19px;height:11.3px;border:1px solid #707070;background:#fff"></div><div class="a" style="left:612.8px;top:249.2px;width:8.2px;height:9.3px;background:#f0f0f0;border-bottom:1px solid #a0a0a0"></div><svg class="a" style="left:614px;top:252.2px;overflow:visible" width="7" height="4" viewBox="614 252.2 7 4"><path d="M615.2 253.2H619.4L617.3 255.5Z" fill="#000"/></svg><div class="t" style="left:605.20px;top:251px;font-size:7.4px;color:#141414;transform:scaleX(0.8260);transform-origin:0 0;">8</div><div class="a" style="left:512.2px;top:263.5px;width:7px;height:7px;background:#fff;border-top:1px solid #6a6a6a;border-left:1px solid #6a6a6a;border-right:1px solid #e8e8e8;border-bottom:1px solid #e8e8e8"></div><div class="t" style="left:522.20px;top:264px;font-size:7.4px;color:#141414;transform:scaleX(0.7735);transform-origin:0 0;">CAD - Silk</div><div class="a" style="left:577.3px;top:262.2px;width:18.6px;height:11.3px;border:1px solid #c0c0c0;background:#f4f4f4"></div><div class="a" style="left:579.1px;top:263.7px;width:9.6px;height:9.3px;background:#ffd6d6"></div><svg class="a" style="left:590px;top:266.2px;overflow:visible" width="5" height="3" viewBox="590 266.2 5 3"><path d="M590.7 266.7H594.2L592.45 268.9Z" fill="#000"/></svg><div class="a" style="left:603px;top:262.2px;width:19px;height:11.3px;border:1px solid #707070;background:#fff"></div><div class="a" style="left:612.8px;top:263.2px;width:8.2px;height:9.3px;background:#f0f0f0;border-bottom:1px solid #a0a0a0"></div><svg class="a" style="left:614px;top:266.2px;overflow:visible" width="7" height="4" viewBox="614 266.2 7 4"><path d="M615.2 267.2H619.4L617.3 269.5Z" fill="#000"/></svg><div class="t" style="left:605.20px;top:265px;font-size:7.4px;color:#141414;transform:scaleX(0.8260);transform-origin:0 0;">9</div><div class="a" style="left:512.2px;top:277.5px;width:7px;height:7px;background:#fff;border-top:1px solid #6a6a6a;border-left:1px solid #6a6a6a;border-right:1px solid #e8e8e8;border-bottom:1px solid #e8e8e8"></div><svg class="a" style="left:512.2px;top:277.5px;overflow:visible" width="7" height="7" viewBox="512.2 277.5 7 7"><path d="M513.8000000000001 280.9L515.2 282.5L517.8000000000001 279.3" stroke="#000" fill="none" stroke-width="1.3"/></svg><div class="t" style="left:522.20px;top:278px;font-size:7.4px;color:#141414;transform:scaleX(0.7922);transform-origin:0 0;">CAD - Mask</div><div class="a" style="left:577.3px;top:276.2px;width:18.6px;height:11.3px;border:1px solid #c0c0c0;background:#f4f4f4"></div><div class="a" style="left:579.1px;top:277.7px;width:9.6px;height:9.3px;background:#b05f6c"></div><svg class="a" style="left:590px;top:280.2px;overflow:visible" width="5" height="3" viewBox="590 280.2 5 3"><path d="M590.7 280.7H594.2L592.45 282.9Z" fill="#000"/></svg><div class="a" style="left:603px;top:276.2px;width:19px;height:11.3px;border:1px solid #707070;background:#fff"></div><div class="a" style="left:612.8px;top:277.2px;width:8.2px;height:9.3px;background:#f0f0f0;border-bottom:1px solid #a0a0a0"></div><svg class="a" style="left:614px;top:280.2px;overflow:visible" width="7" height="4" viewBox="614 280.2 7 4"><path d="M615.2 281.2H619.4L617.3 283.5Z" fill="#000"/></svg><div class="t" style="left:605.40px;top:279px;font-size:7.4px;color:#141414;transform:scaleX(0.7045);transform-origin:0 0;">10</div><div class="a" style="left:512.2px;top:291.5px;width:7px;height:7px;background:#fff;border-top:1px solid #6a6a6a;border-left:1px solid #6a6a6a;border-right:1px solid #e8e8e8;border-bottom:1px solid #e8e8e8"></div><svg class="a" style="left:512.2px;top:291.5px;overflow:visible" width="7" height="7" viewBox="512.2 291.5 7 7"><path d="M513.8000000000001 294.9L515.2 296.5L517.8000000000001 293.3" stroke="#000" fill="none" stroke-width="1.3"/></svg><div class="t" style="left:522.20px;top:292px;font-size:7.4px;color:#141414;transform:scaleX(0.8196);transform-origin:0 0;">Standard - Mask</div><div class="a" style="left:577.3px;top:290.2px;width:18.6px;height:11.3px;border:1px solid #c0c0c0;background:#f4f4f4"></div><div class="a" style="left:579.1px;top:291.7px;width:9.6px;height:9.3px;background:#ff00ff"></div><svg class="a" style="left:590px;top:294.2px;overflow:visible" width="5" height="3" viewBox="590 294.2 5 3"><path d="M590.7 294.7H594.2L592.45 296.9Z" fill="#000"/></svg><div class="a" style="left:603px;top:290.2px;width:19px;height:11.3px;border:1px solid #707070;background:#fff"></div><div class="a" style="left:612.8px;top:291.2px;width:8.2px;height:9.3px;background:#f0f0f0;border-bottom:1px solid #a0a0a0"></div><svg class="a" style="left:614px;top:294.2px;overflow:visible" width="7" height="4" viewBox="614 294.2 7 4"><path d="M615.2 295.2H619.4L617.3 297.5Z" fill="#000"/></svg><div class="t" style="left:605.40px;top:293px;font-size:7.4px;color:#141414;transform:scaleX(0.7543);transform-origin:0 0;">11</div><div class="a" style="left:512.2px;top:305.5px;width:7px;height:7px;background:#f4f4f4;border-top:1px solid #a8a8a8;border-left:1px solid #a8a8a8;border-right:1px solid #ececec;border-bottom:1px solid #ececec"></div><div class="t" style="left:522.20px;top:306px;font-size:7.4px;color:#8c8c8c;transform:scaleX(0.7951);transform-origin:0 0;">Gerber - Mask</div><div class="a" style="left:577.3px;top:304.2px;width:18.6px;height:11.3px;border:1px solid #c0c0c0;background:#f4f4f4"></div><div class="a" style="left:579.1px;top:305.7px;width:9.6px;height:9.3px;background:#b8b8b8"></div><svg class="a" style="left:590px;top:308.2px;overflow:visible" width="5" height="3" viewBox="590 308.2 5 3"><path d="M590.7 308.7H594.2L592.45 310.9Z" fill="#c4c4c4"/></svg><div class="a" style="left:603px;top:304.2px;width:19px;height:11.3px;border:1px solid #707070;background:#fff"></div><div class="a" style="left:612.8px;top:305.2px;width:8.2px;height:9.3px;background:#f0f0f0;border-bottom:1px solid #a0a0a0"></div><svg class="a" style="left:614px;top:308.2px;overflow:visible" width="7" height="4" viewBox="614 308.2 7 4"><path d="M615.2 309.2H619.4L617.3 311.5Z" fill="#000"/></svg><div class="t" style="left:605.40px;top:307px;font-size:7.4px;color:#141414;transform:scaleX(0.7045);transform-origin:0 0;">12</div><div class="a" style="left:512.2px;top:319.5px;width:7px;height:7px;background:#fff;border-top:1px solid #6a6a6a;border-left:1px solid #6a6a6a;border-right:1px solid #e8e8e8;border-bottom:1px solid #e8e8e8"></div><svg class="a" style="left:512.2px;top:319.5px;overflow:visible" width="7" height="7" viewBox="512.2 319.5 7 7"><path d="M513.8000000000001 322.9L515.2 324.5L517.8000000000001 321.3" stroke="#000" fill="none" stroke-width="1.3"/></svg><div class="t" style="left:522.20px;top:320px;font-size:7.4px;color:#141414;transform:scaleX(0.7996);transform-origin:0 0;">Solder - Mask</div><div class="a" style="left:577.3px;top:318.2px;width:18.6px;height:11.3px;border:1px solid #c0c0c0;background:#f4f4f4"></div><div class="a" style="left:579.1px;top:319.7px;width:9.6px;height:9.3px;background:#98b9c1"></div><svg class="a" style="left:590px;top:322.2px;overflow:visible" width="5" height="3" viewBox="590 322.2 5 3"><path d="M590.7 322.7H594.2L592.45 324.9Z" fill="#000"/></svg><div class="a" style="left:603px;top:318.2px;width:19px;height:11.3px;border:1px solid #707070;background:#fff"></div><div class="a" style="left:612.8px;top:319.2px;width:8.2px;height:9.3px;background:#f0f0f0;border-bottom:1px solid #a0a0a0"></div><svg class="a" style="left:614px;top:322.2px;overflow:visible" width="7" height="4" viewBox="614 322.2 7 4"><path d="M615.2 323.2H619.4L617.3 325.5Z" fill="#000"/></svg><div class="t" style="left:605.40px;top:321px;font-size:7.4px;color:#141414;transform:scaleX(0.7045);transform-origin:0 0;">13</div><div class="a" style="left:512.2px;top:333.5px;width:7px;height:7px;background:#f4f4f4;border-top:1px solid #a8a8a8;border-left:1px solid #a8a8a8;border-right:1px solid #ececec;border-bottom:1px solid #ececec"></div><svg class="a" style="left:512.2px;top:333.5px;overflow:visible" width="7" height="7" viewBox="512.2 333.5 7 7"><path d="M513.8000000000001 336.9L515.2 338.5L517.8000000000001 335.3" stroke="#9a9a9a" fill="none" stroke-width="1.3"/></svg><div class="t" style="left:522.20px;top:334px;font-size:7.4px;color:#8c8c8c;transform:scaleX(0.7596);transform-origin:0 0;">BOM Check</div><div class="a" style="left:577.3px;top:332.2px;width:18.6px;height:11.3px;border:1px solid #c0c0c0;background:#f4f4f4"></div><div class="a" style="left:579.1px;top:333.7px;width:9.6px;height:9.3px;background:#b8b8b8"></div><svg class="a" style="left:590px;top:336.2px;overflow:visible" width="5" height="3" viewBox="590 336.2 5 3"><path d="M590.7 336.7H594.2L592.45 338.9Z" fill="#c4c4c4"/></svg><div class="a" style="left:603px;top:332.2px;width:19px;height:11.3px;border:1px solid #707070;background:#fff"></div><div class="a" style="left:612.8px;top:333.2px;width:8.2px;height:9.3px;background:#f0f0f0;border-bottom:1px solid #a0a0a0"></div><svg class="a" style="left:614px;top:336.2px;overflow:visible" width="7" height="4" viewBox="614 336.2 7 4"><path d="M615.2 337.2H619.4L617.3 339.5Z" fill="#000"/></svg><div class="t" style="left:605.40px;top:335px;font-size:7.4px;color:#141414;transform:scaleX(0.7045);transform-origin:0 0;">14</div><div class="a" style="left:513.2px;top:353.5px;width:7px;height:7px;background:#fff;border-top:1px solid #6a6a6a;border-left:1px solid #6a6a6a;border-right:1px solid #e8e8e8;border-bottom:1px solid #e8e8e8"></div><svg class="a" style="left:513.2px;top:353.5px;overflow:visible" width="7" height="7" viewBox="513.2 353.5 7 7"><path d="M514.8000000000001 356.9L516.2 358.5L518.8000000000001 355.3" stroke="#000" fill="none" stroke-width="1.3"/></svg><div class="t" style="left:522.60px;top:354px;font-size:7.4px;color:#141414;transform:scaleX(0.7613);transform-origin:0 0;">Drill</div><div class="a" style="left:577.3px;top:352.2px;width:18.6px;height:11.3px;border:1px solid #c0c0c0;background:#f4f4f4"></div><div class="a" style="left:579.1px;top:353.7px;width:9.6px;height:9.3px;background:#3f3f3f"></div><svg class="a" style="left:590px;top:356.2px;overflow:visible" width="5" height="3" viewBox="590 356.2 5 3"><path d="M590.7 356.7H594.2L592.45 358.9Z" fill="#000"/></svg><div class="a" style="left:603px;top:352.2px;width:19px;height:11.3px;border:1px solid #707070;background:#fff"></div><div class="a" style="left:612.8px;top:353.2px;width:8.2px;height:9.3px;background:#f0f0f0;border-bottom:1px solid #a0a0a0"></div><svg class="a" style="left:614px;top:356.2px;overflow:visible" width="7" height="4" viewBox="614 356.2 7 4"><path d="M615.2 357.2H619.4L617.3 359.5Z" fill="#000"/></svg><div class="t" style="left:605.40px;top:355px;font-size:7.4px;color:#141414;transform:scaleX(0.7045);transform-origin:0 0;">15</div><div class="a" style="left:502px;top:443px;width:131px;height:1px;background:#fafafa"></div><svg class="a" style="left:502px;top:373px" width="131" height="70" viewBox="502 373 131 70"><rect x="502" y="373" width="131" height="70" fill="#000"/><path d="M534 387.8V405.3H549.5Q550.5 405.3 550.5 404.3V387.8" fill="none" stroke="#c8c820" stroke-width="1"/><g fill="none" stroke="#b82a2a" stroke-width="1.4" stroke-linejoin="round"><rect x="529.8" y="387.8" width="74.8" height="39.3" rx="1"/><path d="M534 392H551.6L553.2 394.7V399H563.3V403.7L565.4 405.9V419.2H561.2V423.4H546 A2 2 0 0 0 542 423.4 H534Z"/><path d="M569.4 391.7H585.9L588 394.2V398.7H598.2V404.3L599.8 405.9V418.6H596.6V422.9H581 A2 2 0 0 0 577 422.9 H569.4Z"/></g><g fill="#e04040"><circle cx="534" cy="395" r="0.8"/><circle cx="534" cy="409" r="0.8"/><circle cx="534" cy="420" r="0.8"/><circle cx="569.4" cy="395" r="0.8"/><circle cx="569.4" cy="409" r="0.8"/><circle cx="569.4" cy="420" r="0.8"/><circle cx="553.2" cy="397" r="0.8"/><circle cx="588" cy="397" r="0.8"/><circle cx="565.4" cy="412" r="0.8"/><circle cx="599.8" cy="412" r="0.8"/></g></svg><div class="a" style="left:2px;top:449px;width:634px;height:1px;background:#fbfbfb"></div><div class="a" style="left:0px;top:450px;width:637px;height:1px;background:#7a7a7a"></div><div class="a" style="left:116px;top:449px;width:379px;height:2px;background:#9a9a9a"></div><div class="a" style="left:247px;top:449px;width:34px;height:2px;background:#c4bdb6"></div><div class="a" style="left:2px;top:199px;width:1px;height:250px;background:#e4e4e4"></div><div class="a" style="left:2px;top:65px;width:1px;height:134px;background:#9a9a9a"></div><svg class="a" style="left:629px;top:444px;overflow:visible" width="7" height="7" viewBox="629 444 7 7"><path d="M635 445.5L630.5 450M635 447.5L632.5 450" stroke="#a8a8a8" stroke-width="0.8" stroke-dasharray="1 0.7"/></svg></body></html>
